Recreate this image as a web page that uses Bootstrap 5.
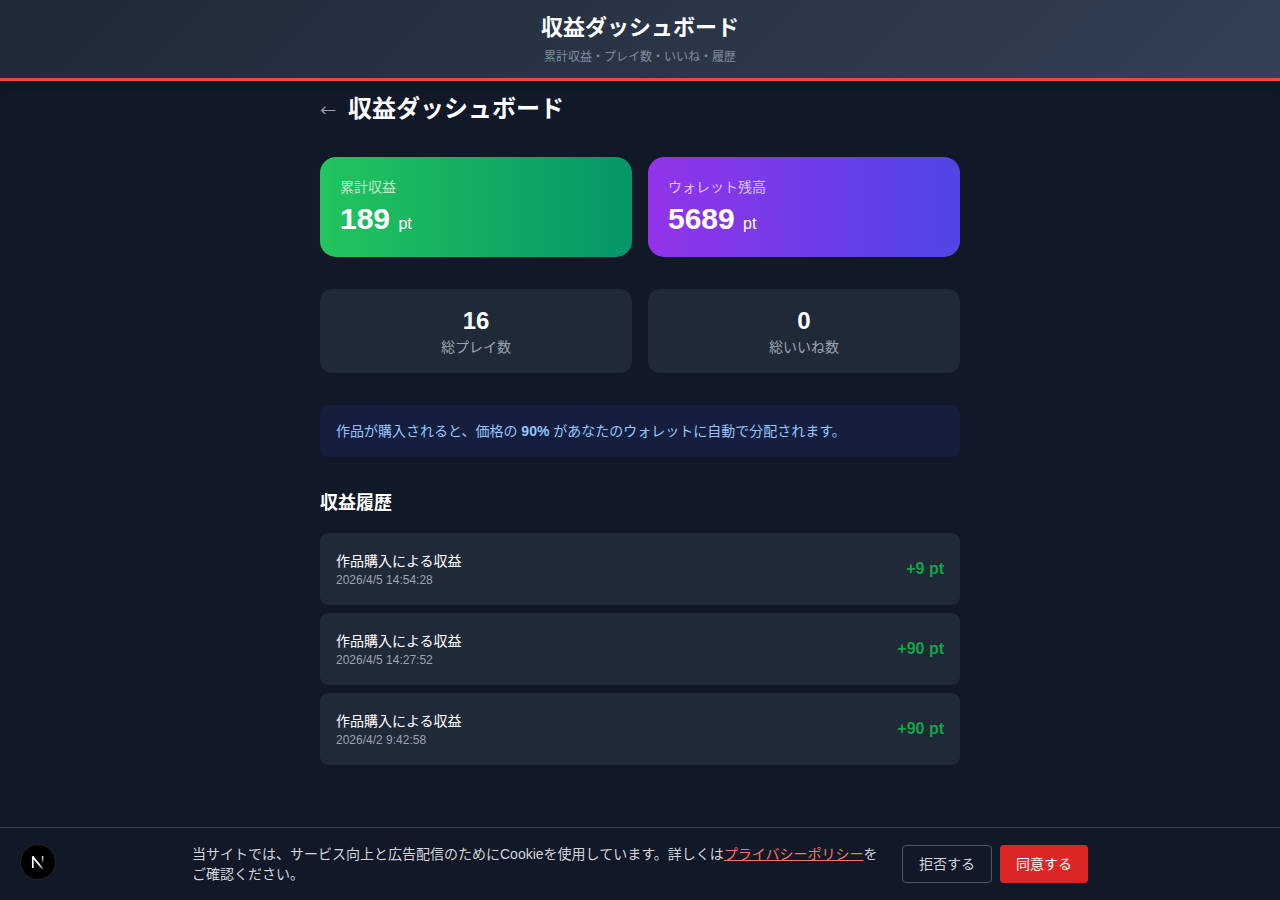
<!DOCTYPE html>
<html lang="ja" data-bs-theme="dark">
<head>
<meta charset="utf-8">
<meta name="viewport" content="width=device-width, initial-scale=1">
<title>収益ダッシュボード</title>
<link rel="stylesheet" href="https://cdn.jsdelivr.net/npm/bootstrap@5.3.0/dist/css/bootstrap.min.css">
<style>
  body { background: #111827; color: #fff; font-family: "Liberation Sans", "Noto Sans CJK JP", sans-serif; font-size: 14px; line-height: 20px; }
  .site-header { background: linear-gradient(135deg, #1f2937, #334155); border-bottom: 3px solid #ef4444; box-shadow: 0 2px 10px rgba(0, 0, 0, .3); padding: 12px 16px; }
  .site-title { font-size: 22px; line-height: 32px; }
  .site-subtitle { font-size: 12px; line-height: 18px; color: #94a3b8; opacity: .8; margin-top: 4px; }
  .page { max-width: 672px; padding: 12px 16px 128px; }
  .page-title { font-size: 24px; line-height: 32px; }
  .back-link { font-family: "Noto Sans CJK JP", sans-serif; font-size: 16px; line-height: 28px; color: #9ca3af; }
  .heading-row { gap: 12px; }
  .section { margin-bottom: 32px; }
  .balance { border-radius: 16px; padding: 20px; }
  .balance-earned { background: linear-gradient(to right, #22c55e, #059669); }
  .balance-wallet { background: linear-gradient(to right, #9333ea, #4f46e5); }
  .balance-label { color: rgba(255, 255, 255, .7); }
  .balance-value { font-size: 30px; line-height: 36px; margin-top: 4px; }
  .unit { font-size: 16px; line-height: 20px; }
  .panel { background: #1f2937; }
  .stat { border-radius: 12px; padding: 16px; }
  .stat-value { font-size: 24px; line-height: 32px; }
  .muted-text { color: #9ca3af; }
  .notice { background: #151f3d; color: #93c5fd; border-radius: 8px; padding: 16px; }
  .history-title { font-size: 18px; line-height: 28px; margin-bottom: 16px; }
  .history-item { border-radius: 8px; padding: 16px; }
  .history-text { padding: 2px 0 0; }
  .history-date { font-size: 12px; line-height: 18px; }
  .history-amount { font-size: 16px; color: #16a34a; }
  .cookie-bar { background: #111827; border-top: 1px solid #374151; padding: 16px; }
  .cookie-inner { max-width: 896px; }
  .cookie-text, .btn-decline { color: #d1d5db; }
  .cookie-text a { color: #f87171; }
  .cookie-bar .btn { font-size: 14px; line-height: 20px; padding: 8px 16px; border-radius: 4px; }
  .btn-decline { border-color: #4b5563; }
  .cookie-bar .btn-agree { background: #dc2626; color: #fff; border: 0; }
  .dev-badge { position: fixed; left: 20px; bottom: 20px; width: 36px; height: 36px; z-index: 1040; }
</style>
</head>
<body>
<header class="site-header text-center">
  <div class="site-title fw-bold">収益ダッシュボード</div>
  <p class="site-subtitle mb-0">累計収益・プレイ数・いいね・履歴</p>
</header>

<main class="page mx-auto">
  <div class="heading-row d-flex align-items-center section">
    <a class="back-link text-decoration-none" href="#" aria-label="戻る">←</a>
    <h1 class="page-title fw-bold mb-0">収益ダッシュボード</h1>
  </div>

  <section class="row g-3 section">
    <div class="col-6"><div class="balance balance-earned">
      <div class="balance-label">累計収益</div>
      <div class="balance-value fw-bold">189 <span class="unit fw-normal">pt</span></div>
    </div></div>
    <div class="col-6"><div class="balance balance-wallet">
      <div class="balance-label">ウォレット残高</div>
      <div class="balance-value fw-bold">5689 <span class="unit fw-normal">pt</span></div>
    </div></div>
  </section>

  <section class="row g-3 section text-center">
    <div class="col-6"><div class="panel stat">
      <div class="stat-value fw-bold">16</div>
      <div class="muted-text">総プレイ数</div>
    </div></div>
    <div class="col-6"><div class="panel stat">
      <div class="stat-value fw-bold">0</div>
      <div class="muted-text">総いいね数</div>
    </div></div>
  </section>

  <p class="notice section">作品が購入されると、価格の <strong>90%</strong> があなたのウォレットに自動で分配されます。</p>

  <h2 class="history-title fw-bold">収益履歴</h2>
  <ul class="list-unstyled d-flex flex-column gap-2 mb-0">
    <li class="panel history-item d-flex justify-content-between align-items-center">
      <div class="history-text"><div>作品購入による収益</div><div class="history-date muted-text">2026/4/5 14:54:28</div></div>
      <span class="history-amount fw-bold">+9 pt</span>
    </li>
    <li class="panel history-item d-flex justify-content-between align-items-center">
      <div class="history-text"><div>作品購入による収益</div><div class="history-date muted-text">2026/4/5 14:27:52</div></div>
      <span class="history-amount fw-bold">+90 pt</span>
    </li>
    <li class="panel history-item d-flex justify-content-between align-items-center">
      <div class="history-text"><div>作品購入による収益</div><div class="history-date muted-text">2026/4/2 9:42:58</div></div>
      <span class="history-amount fw-bold">+90 pt</span>
    </li>
  </ul>
</main>

<div class="cookie-bar fixed-bottom">
  <div class="cookie-inner mx-auto d-flex align-items-center gap-3">
    <p class="cookie-text flex-fill mb-0">当サイトでは、サービス向上と広告配信のためにCookieを使用しています。詳しくは<a href="#">プライバシーポリシー</a>をご確認ください。</p>
    <div class="d-flex gap-2 flex-shrink-0">
      <button type="button" class="btn btn-decline">拒否する</button>
      <button type="button" class="btn btn-agree">同意する</button>
    </div>
  </div>
</div>

<button type="button" class="dev-badge rounded-circle border-0 bg-transparent p-0" aria-label="開発ツール">
  <svg class="d-block" width="36" height="36" viewBox="0 0 36 36" fill="none">
    <defs>
      <linearGradient id="diag" x1="18" y1="18" x2="24" y2="25" gradientUnits="userSpaceOnUse"><stop offset=".3" stop-color="#fff"/><stop offset="1" stop-color="#fff" stop-opacity=".2"/></linearGradient>
      <linearGradient id="stem" x1="23" y1="12" x2="23" y2="20" gradientUnits="userSpaceOnUse"><stop stop-color="#fff"/><stop offset="1" stop-color="#fff" stop-opacity="0"/></linearGradient>
    </defs>
    <circle cx="18" cy="18" r="17.5" fill="#000" stroke="#262626"/>
    <path d="M12.6 12.6L22.8 25" stroke="url(#diag)" stroke-width="1.8"/>
    <path d="M12.8 24V12.2" stroke="#fff" stroke-width="1.7"/>
    <path d="M22.6 12.2V20" stroke="url(#stem)" stroke-width="1.6"/>
  </svg>
</button>
<script src="https://cdn.jsdelivr.net/npm/bootstrap@5.3.0/dist/js/bootstrap.bundle.min.js"></script>
</body>
</html>
